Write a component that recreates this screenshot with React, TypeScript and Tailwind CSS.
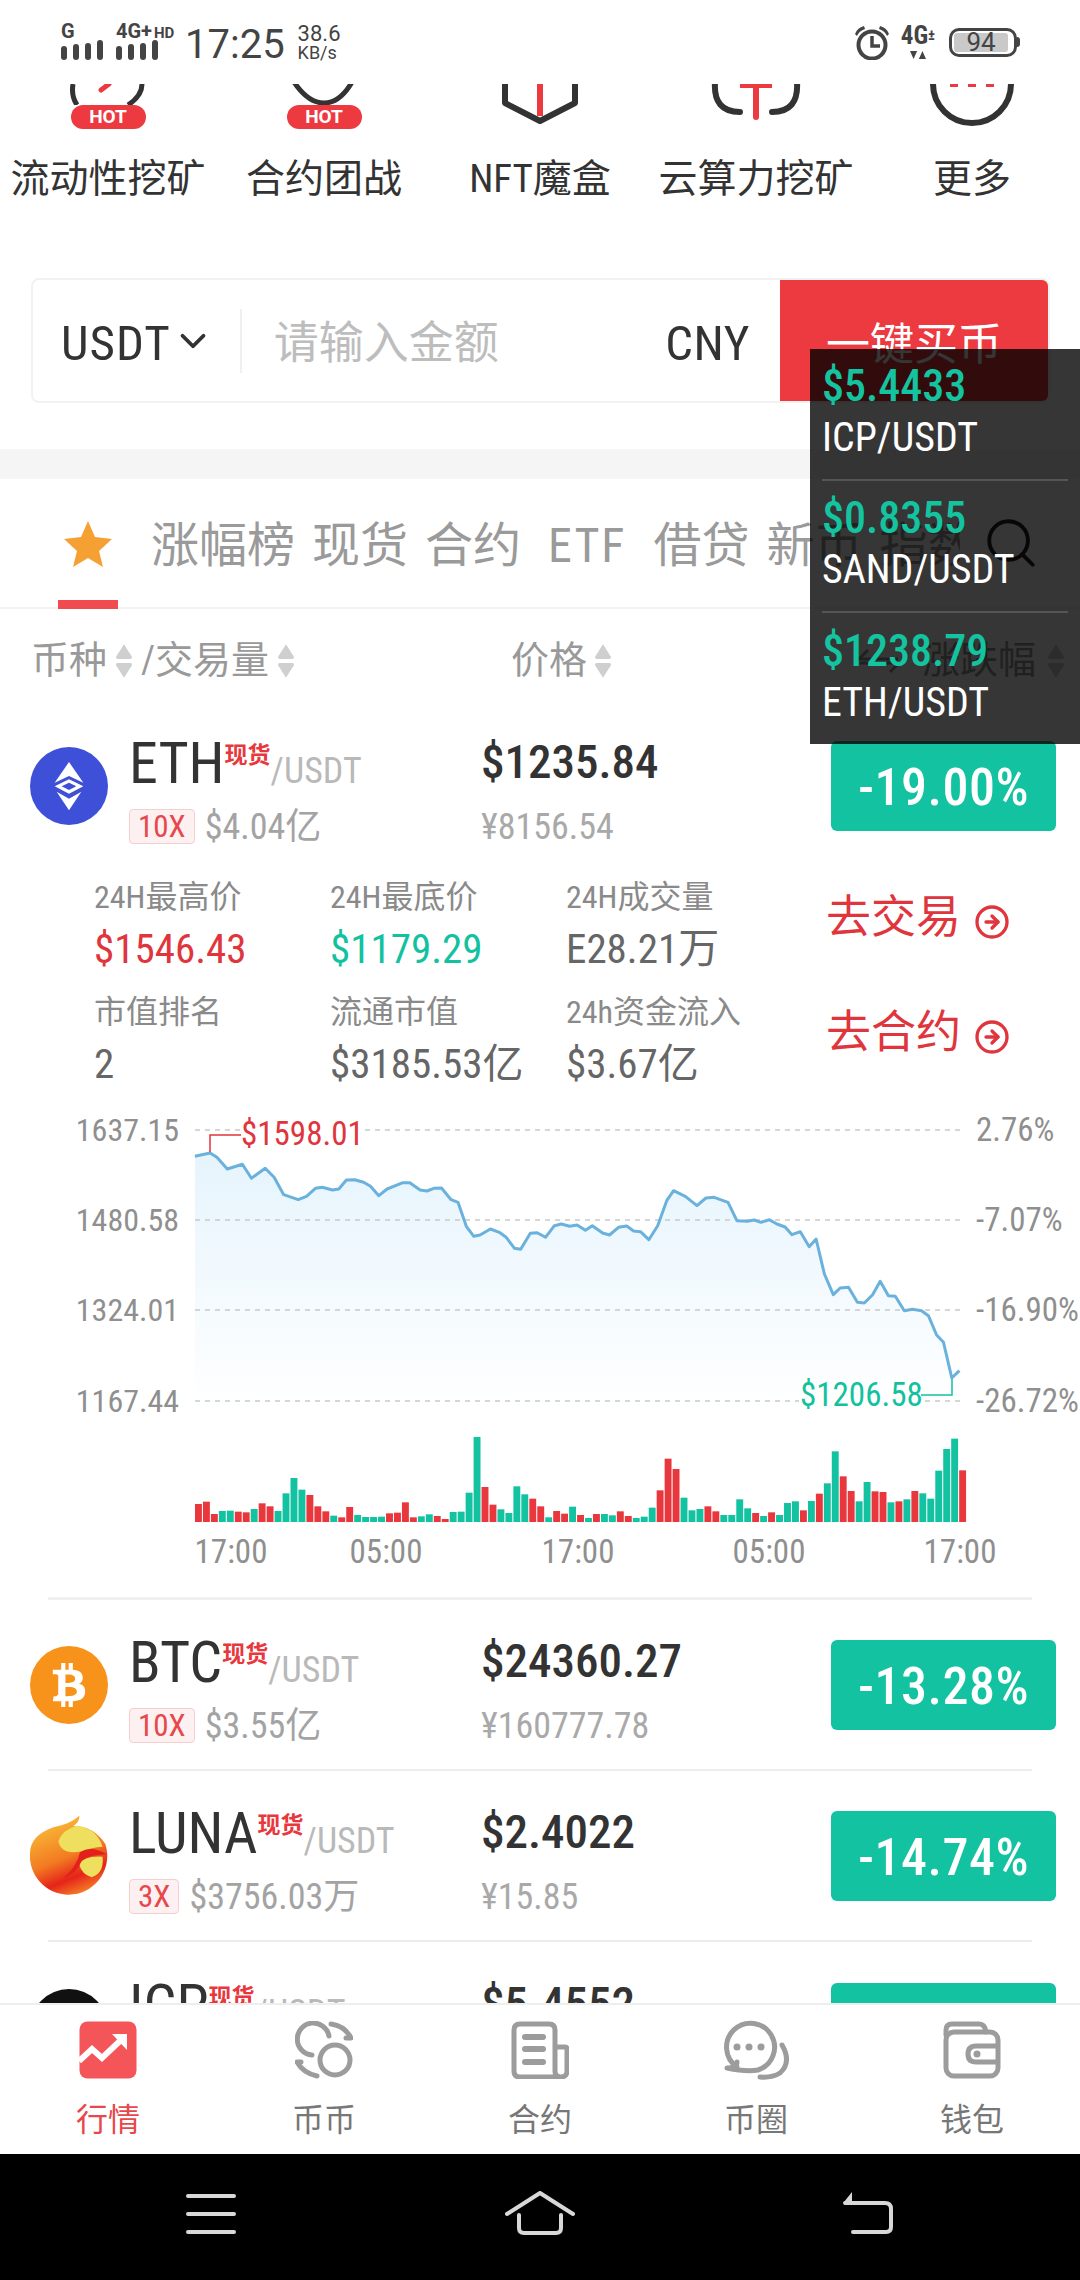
import { CircleArrowRight, ChevronDown, Search } from "lucide-react";
import { FaBtc } from "react-icons/fa";

const LINE = "283,202 305,192 315,205 330,240 352,226 365,268 385,238 398,265 412,317 433,332 445,322 458,298 468,295 483,303 492,300 503,273 515,272 528,280 538,292 550,320 562,300 585,281 595,281 610,303 620,306 630,298 641,297 655,332 665,340 677,412 688,442 697,438 712,420 725,430 735,445 747,478 756,481 770,433 780,431 792,445 805,410 815,405 827,412 838,408 850,424 860,410 875,432 885,438 898,415 910,411 920,426 930,428 942,452 955,410 968,335 978,305 995,322 1012,350 1025,327 1037,325 1057,340 1070,395 1085,397 1095,393 1105,400 1117,392 1128,405 1140,414 1150,437 1162,428 1175,473 1185,450 1197,555 1210,617 1220,597 1232,595 1245,640 1255,642 1267,617 1278,577 1290,620 1300,622 1313,665 1325,661 1338,665 1348,680 1360,738 1370,760 1382,867 1393,845"
  .split(" ")
  .map((p) => p.split(",").map(Number))
  .map(([h, v]) => [+(h / 1.452).toFixed(1), +(v / 3).toFixed(1)]);

const BARS = "r1245 r1238 r1275 g1266 g1265 r1268 r1270 g1260 r1243 r1252 g1266 g1213 g1167 g1202 r1218 r1252 r1267 g1280 r1285 r1254 g1278 g1284 g1284 g1283 r1273 r1271 r1240 r1285 g1282 g1276 r1281 r1290 g1269 g1268 g1211 g1044 r1194 r1247 g1261 g1272 g1192 g1216 r1229 r1252 g1285 r1266 r1274 g1253 r1278 g1287 r1275 g1275 g1279 r1267 r1281 g1287 g1283 g1256 r1204 r1109 r1140 g1226 g1264 g1260 r1252 r1267 g1278 g1278 g1231 g1258 r1272 g1281 r1270 g1278 g1242 g1237 r1264 g1236 r1214 g1183 g1087 r1162 r1206 g1237 g1179 r1207 r1209 g1240 r1237 g1231 r1206 g1213 g1229 g1145 g1080 g1049 r1144".split(" ");

function SortArrows() {
  return (
    <svg width="20" height="36" viewBox="0 0 19 34" className="shrink-0">
      <path d="M9.5 1 L17 13 Q17.5 15 15.5 15 H3.5 Q1.5 15 2 13 Z" fill="#cfcfcf" />
      <path d="M9.5 33 L17 21 Q17.5 19 15.5 19 H3.5 Q1.5 19 2 21 Z" fill="#cfcfcf" />
    </svg>
  );
}

function Signal() {
  return (
    <svg width="42" height="20" viewBox="0 0 42 20" className="block">
      <rect x="0" y="6" width="6" height="14" rx="3" fill="#444" />
      <rect x="12" y="4" width="6" height="16" rx="3" fill="#444" />
      <rect x="24" y="3" width="6" height="17" rx="3" fill="#444" />
      <rect x="36" y="0" width="6" height="20" rx="3" fill="#444" />
    </svg>
  );
}

function StatusBar() {
  return (
    <div className="h-[84px] shrink-0 flex items-center pl-[61px] pr-[60px] text-[#444] font-stretch-normal">
      <div className="w-[55px] h-[36px] flex flex-col justify-between">
        <span className="text-[20px] leading-[14px] font-bold">G</span>
        <Signal />
      </div>
      <div className="w-[71px] h-[36px] flex flex-col justify-between">
        <span className="text-[20px] leading-[14px] font-bold whitespace-nowrap">4G+<span className="text-[15px] ml-[2px]">HD</span></span>
        <Signal />
      </div>
      <span className="text-[40px] leading-none ml-[-2px] mt-[6px]">17:25</span>
      <div className="ml-[13px] flex flex-col mt-[2px]">
        <span className="text-[22px] leading-[20px]">38.6</span>
        <span className="text-[18px] leading-[18px]">KB/s</span>
      </div>
      <div className="flex-1" />
      <svg width="36" height="36" viewBox="0 0 36 36" className="mr-[9px]">
        <circle cx="18" cy="21" r="13.5" fill="none" stroke="#444" strokeWidth="4" />
        <path d="M18 12 V22 H26" fill="none" stroke="#444" strokeWidth="3.5" />
        <path d="M1 10 Q3 4 10 2 L11 5 Q5 7 3 12 Z M35 10 Q33 4 26 2 L25 5 Q31 7 33 12 Z" fill="#444" />
      </svg>
      <div className="w-[38px] h-[34px] flex flex-col items-center mr-[12px]">
        <span className="text-[25px] leading-[20px] font-bold font-stretch-condensed whitespace-nowrap">4G<span className="text-[15px] align-[4px]">±</span></span>
        <svg width="18" height="9" viewBox="0 0 18 9" className="mt-[5px]">
          <path d="M0 0 H8 L4 9 Z M10 9 H18 L14 0 Z" fill="#444" />
        </svg>
      </div>
      <div className="w-[68px] h-[29px] border-[3px] border-[#444] rounded-[10px] p-[2px] flex">
        <div className="w-[54px] h-full bg-[#c9c9c9] rounded-[3px] flex items-center justify-center text-[26px] leading-none">94</div>
      </div>
      <div className="w-[3px] h-[10px] bg-[#444] rounded-r-sm" />
    </div>
  );
}

function Hot() {
  return (
    <div className="w-[75px] h-[24px] rounded-full bg-[#ec3a40] text-white text-[19px] font-bold leading-[24px] text-center font-stretch-normal">HOT</div>
  );
}

function MenuIcon({ n }: { n: number }) {
  if (n === 0)
    return (
      <div className="h-[46px] flex flex-col items-center">
        <svg width="76" height="21" viewBox="0 0 76 21" className="block shrink-0">
          <path d="M3 0 Q1 12 7 21 M72 0 Q72 12 58 21" fill="none" stroke="#333" strokeWidth="5" />
          <path d="M31 6 L39 0" stroke="#ec3a40" strokeWidth="5" strokeLinecap="round" />
        </svg>
        <Hot />
      </div>
    );
  if (n === 1)
    return (
      <div className="h-[46px] flex flex-col items-center">
        <svg width="76" height="21" viewBox="0 0 76 21" className="block shrink-0">
          <path d="M8 -2 Q22 19 38 19 Q54 19 66 -2" fill="none" stroke="#333" strokeWidth="5" />
        </svg>
        <Hot />
      </div>
    );
  if (n === 2)
    return (
      <svg width="76" height="46" viewBox="0 0 76 46" className="block">
        <path d="M3 -2 V19 L38 37 L73 19 V-2" fill="none" stroke="#333" strokeWidth="6" strokeLinejoin="round" />
        <path d="M38 0 V32" stroke="#ec3a40" strokeWidth="6" />
      </svg>
    );
  if (n === 3)
    return (
      <svg width="92" height="46" viewBox="0 0 92 46" className="block">
        <path d="M5 -2 Q3 28 30 28 M87 -2 Q89 28 62 28" fill="none" stroke="#333" strokeWidth="6" strokeLinecap="round" />
        <path d="M30 1 H62" stroke="#ec3a40" strokeWidth="6" />
        <path d="M46 0 V33" stroke="#ec3a40" strokeWidth="6" strokeLinecap="round" />
      </svg>
    );
  return (
    <svg width="84" height="46" viewBox="0 0 84 46" className="block">
      <path d="M3 0 A39 39 0 0 0 81 0" fill="none" stroke="#333" strokeWidth="6" />
      <path d="M20 1 H28 M38 1 H46 M56 1 H64" stroke="#ec3a40" strokeWidth="4" />
    </svg>
  );
}

function Menu() {
  const items = ["流动性挖矿", "合约团战", "NFT魔盒", "云算力挖矿", "更多"];
  return (
    <div className="grid grid-cols-5 shrink-0">
      {items.map((t, i) => (
        <div key={t} className="flex flex-col items-center">
          <MenuIcon n={i} />
          <div className="mt-[27px] text-[39px] leading-[44px] text-[#333] whitespace-nowrap">{t}</div>
        </div>
      ))}
    </div>
  );
}

function BuyBar() {
  return (
    <div className="mt-[77px] mx-[31px] w-[1019px] h-[125px] shrink-0 rounded-lg border-2 border-[#f2f2f2] flex items-center overflow-hidden">
      <span className="ml-[28px] mt-[6px] text-[49px] text-[#333] leading-[60px] tracking-[1px]">USDT</span>
      <ChevronDown size={42} strokeWidth={2.2} className="text-[#333] ml-[1px]" />
      <div className="ml-[26px] w-[2px] h-[64px] bg-[#f0f0f0]" />
      <span className="ml-[32px] mt-[6px] text-[45px] text-[#bdbdbd] leading-[60px]">请输入金额</span>
      <span className="ml-auto mt-[6px] text-[49px] text-[#333] leading-[60px] tracking-[0.5px]">CNY</span>
      <div className="ml-[30px] w-[268px] h-[125px] pt-[8px] bg-[#ec3a40] flex items-center justify-center text-[44px] text-white">一键买币</div>
    </div>
  );
}

function Tabs() {
  return (
    <div className="h-[130px] shrink-0 border-b-2 border-[#f3f3f3] flex items-center text-[48px] text-[#9a9a9a] relative">
      <div className="w-[60px] ml-[58px] h-[130px] flex items-center justify-center border-b-[9px] border-[#f04c50] mb-[-2px] shrink-0">
        <svg width="48" height="46" viewBox="0 0 48 46" className="mt-[9px]">
          <path d="M24 0 L31 16 L48 18 L35 30 L39 46 L24 37 L9 46 L13 30 L0 18 L17 16 Z" fill="#f5a033" />
        </svg>
      </div>
      <div className="ml-[33px] pt-[5px] flex gap-[17px] whitespace-nowrap leading-[64px] overflow-hidden flex-1">
        <span>涨幅榜</span>
        <span>现货</span>
        <span>合约</span>
        <span className="mx-[10px] tracking-[2px]">ETF</span>
        <span>借贷</span>
        <span>新币</span>
        <span>指数</span>
      </div>
      <div className="w-[120px] h-[100px] shrink-0 flex items-center justify-end pr-[40px] bg-gradient-to-r from-white/0 to-white to-50%">
        <Search size={58} strokeWidth={1.6} className="text-[#222]" />
      </div>
    </div>
  );
}

function HeaderRow() {
  return (
    <div className="h-[91px] pt-[12px] shrink-0 flex items-center pl-[31px] text-[38px] text-[#999]">
      <div className="w-[480px] flex items-center gap-[7px] whitespace-nowrap">
        <span>币种</span>
        <SortArrows />
        <span>/交易量</span>
        <SortArrows />
      </div>
      <div className="w-[346px] flex items-center gap-[6px]">
        <span>价格</span>
        <SortArrows />
      </div>
      <svg width="46" height="34" viewBox="0 0 46 34" className="ml-[-1px]" fill="none" stroke="#999" strokeWidth="3">
        <path d="M12 6 L3 15 H42 M34 28 L43 19 H4" />
      </svg>
      <span className="ml-[20px]">涨跌幅</span>
      <span className="ml-[10px]"><SortArrows /></span>
    </div>
  );
}

function EthLogo() {
  return (
    <svg width="78" height="78" viewBox="30 23 234 234" className="block">
      <circle cx="147" cy="140" r="117" fill="#3f50d8" />
      <path d="M147 68 L190 130 L147 110 L104 130 Z" fill="#fff" />
      <path d="M147 120 L190 141 L147 163 L104 141 Z M147 130 L125 141 L147 152 L169 141 Z" fill="#fff" fillRule="evenodd" />
      <path d="M110 157 L147 178 L184 157 L147 213 Z" fill="#fff" />
    </svg>
  );
}

function BtcLogo() {
  return (
    <div className="w-[78px] h-[78px] rounded-full bg-[#f7931a] flex items-center justify-center text-white">
      <FaBtc size={44} />
    </div>
  );
}

function LunaLogo() {
  return (
    <svg width="78" height="84" viewBox="30 530 234 252" className="block">
      <defs>
        <linearGradient id="luna" x1="0.2" y1="0" x2="0.6" y2="1">
          <stop offset="0" stopColor="#f9c53a" />
          <stop offset="0.55" stopColor="#f27a22" />
          <stop offset="0.8" stopColor="#e5231a" />
          <stop offset="1" stopColor="#f47a25" />
        </linearGradient>
      </defs>
      <path d="M30 648 A116 116 0 1 0 256 620 Q220 565 160 566 Q180 552 178 535 Q150 560 100 570 Q30 595 30 648 Z" fill="url(#luna)" />
      <path d="M115 612 Q125 578 170 565 Q228 570 248 628 Q215 630 185 642 Q125 655 115 612 Z" fill="#efdf5e" />
      <path d="M248 660 Q252 708 215 720 Q185 710 178 682 Q190 655 248 658 Z" fill="#efdf5e" />
      <path d="M262 652 Q215 622 180 645 Q170 690 130 722 Q170 710 185 670 Q215 650 262 652 Z" fill="#e3201b" />
    </svg>
  );
}

type RowProps = {
  logo: React.ReactNode;
  name: string;
  lev?: string;
  vol?: string;
  price: string;
  cny?: string;
  change?: string;
  border?: boolean;
};

function Row({ logo, name, lev, vol, price, cny, change, border }: RowProps) {
  return (
    <div className={border ? "h-[171px] shrink-0 border-b-2 border-[#ececec] mx-[48px] flex items-center" : "h-[171px] shrink-0 mx-[48px] flex items-center"}>
      <div className="ml-[-18px] w-[78px] shrink-0 flex justify-center">{logo}</div>
      <div className="ml-[21px] w-[352px] shrink-0 h-[116px] pt-[8px]">
        <div className="h-[54px] leading-[54px] whitespace-nowrap">
          <span className="text-[58px] text-[#333]">{name}</span>
          <span className="text-[23px] font-bold text-[#e8373d] align-[20px] leading-none">现货</span>
          <span className="text-[36px] text-[#b9b9b9] leading-none">/USDT</span>
        </div>
        {lev && (
          <div className="mt-[19px] h-[36px] flex items-center">
            <span className="h-[35px] px-[8px] rounded-[4px] border border-[#f5cfcf] bg-[#fdf0f0] text-[31px] leading-[33px] text-[#e8474c]">{lev}</span>
            <span className="ml-[10px] text-[36px] leading-[40px] text-[#a3a3a3]">{vol}</span>
          </div>
        )}
      </div>
      <div className="w-[350px] shrink-0 h-[114px] pt-[6px]">
        <div className="h-[54px] leading-[54px] text-[47px] font-medium text-[#333]">{price}</div>
        {cny && <div className="mt-[20px] h-[36px] leading-[36px] text-[36px] text-[#a9a9a9]">{cny}</div>}
      </div>
      <div className="w-[225px] h-[90px] pt-[4px] shrink-0 rounded-[6px] bg-[#12c2a0] flex items-center justify-center text-[52px] font-medium text-white tracking-[0.5px]">{change}</div>
    </div>
  );
}

function Stat({ label, value, color }: { label: string; value: string; color: string }) {
  return (
    <div className="flex flex-col">
      <span className="h-[50px] leading-[50px] text-[32px] text-[#8a8a8a] whitespace-nowrap">{label}</span>
      <span className={`mt-[2px] h-[50px] leading-[50px] text-[41px] whitespace-nowrap ${color}`}>{value}</span>
    </div>
  );
}

function Details() {
  return (
    <div className="h-[218px] shrink-0 pl-[94px] pt-[1px] flex">
      <div className="w-[732px] shrink-0 grid grid-cols-[236px_236px_260px] gap-y-[13px] content-start">
        <Stat label="24H最高价" value="$1546.43" color="text-[#e0353c]" />
        <Stat label="24H最底价" value="$1179.29" color="text-[#12c29f]" />
        <Stat label="24H成交量" value="E28.21万" color="text-[#666]" />
        <Stat label="市值排名" value="2" color="text-[#666]" />
        <Stat label="流通市值" value="$3185.53亿" color="text-[#666]" />
        <Stat label="24h资金流入" value="$3.67亿" color="text-[#666]" />
      </div>
      <div className="flex flex-col text-[45px] text-[#e0353c] pt-[18px] gap-[59px]">
        <div className="flex items-center h-[56px]">
          <span className="leading-[56px]">去交易</span>
          <CircleArrowRight size={36} strokeWidth={2.2} className="ml-[13px] mt-[8px]" />
        </div>
        <div className="flex items-center h-[56px]">
          <span className="leading-[56px]">去合约</span>
          <CircleArrowRight size={36} strokeWidth={2.2} className="ml-[13px] mt-[8px]" />
        </div>
      </div>
    </div>
  );
}

function Chart() {
  const pts = LINE.map((p) => p.join(",")).join(" ");
  const grid = [41, 131, 221, 312];
  const left = ["1637.15", "1480.58", "1324.01", "1167.44"];
  const right = ["2.76%", "-7.07%", "-16.90%", "-26.72%"];
  const times: [number, string][] = [[231, "17:00"], [386, "05:00"], [578, "17:00"], [769, "05:00"], [960, "17:00"]];
  return (
    <svg width="1080" height="508" viewBox="0 0 1080 508" className="block shrink-0">
      <defs>
        <linearGradient id="area" x1="0" y1="0" x2="0" y2="1">
          <stop offset="0" stopColor="#e6f4fd" />
          <stop offset="1" stopColor="#ffffff" />
        </linearGradient>
      </defs>
      <polygon points={`195,70 ${pts} 960,320 195,320`} fill="url(#area)" />
      {grid.map((y, i) => (
        <g key={y}>
          <line x1="195" x2="960" y1={y} y2={y} stroke="#c9c9c9" strokeWidth="1.5" strokeDasharray="5 5" />
          <text x="179" y={y + 11} textAnchor="end" className="text-[32px] fill-[#8f8f8f]">{left[i]}</text>
          <text x="976" y={y + 11} className="text-[33px] fill-[#8f8f8f]">{right[i]}</text>
        </g>
      ))}
      <polyline points={pts} fill="none" stroke="#6ab2dc" strokeWidth="3" strokeLinejoin="round" />
      <rect x="240" y="28" width="122" height="36" fill="#fff" />
      <path d="M210 63 V46 H241" fill="none" stroke="#e0353c" strokeWidth="1.5" />
      <text x="241" y="56" className="text-[33px] fill-[#e0353c]">$1598.01</text>
      <rect x="799" y="290" width="122" height="36" fill="#fff" />
      <path d="M952 290 V306 H921" fill="none" stroke="#12c29f" strokeWidth="1.5" />
      <text x="800" y="317" className="text-[33px] fill-[#12c29f]">$1206.58</text>
      {BARS.map((b, i) => {
        const top = +b.slice(1) / 3;
        const x = 195 + i * 7.96;
        return <rect key={i} x={x} y={top} width="6.9" height={433 - top} fill={b[0] === "r" ? "#e8373d" : "#12c2a0"} />;
      })}
      {times.map(([x, t], i) => (
        <text key={i} x={x} y="474" textAnchor="middle" className="text-[33px] fill-[#8f8f8f]">{t}</text>
      ))}
    </svg>
  );
}

function TabIcon({ n }: { n: number }) {
  const s = { fill: "none", stroke: "#9c9c9c", strokeWidth: 5, strokeLinecap: "round" as const, strokeLinejoin: "round" as const };
  if (n === 0)
    return (
      <svg width="58" height="58" viewBox="0 0 58 58" className="block">
        <rect x="0.5" y="0.5" width="57" height="57" rx="8" fill="#f45558" />
        <path d="M0 40 L13 28 L23 37 L42 19" fill="none" stroke="#fff" strokeWidth="6" />
        <path d="M33 13 H48 V29 Z" fill="#fff" />
      </svg>
    );
  if (n === 1)
    return (
      <svg width="58" height="58" viewBox="0 0 58 58" className="block">
        <circle cx="40" cy="39" r="15" {...s} />
        <path d="M34 15 A16 16 0 1 0 17 34" {...s} />
        <path d="M36 3 Q50 5 56 17 M51 17 H56" {...s} />
        <path d="M2 41 Q8 52 22 55 M2 41 H6" {...s} />
      </svg>
    );
  if (n === 2)
    return (
      <svg width="58" height="58" viewBox="0 0 58 58" className="block">
        <path d="M44 56 H9 Q3 56 3 50 V9 Q3 3 9 3 H38 Q44 3 44 9 V50 Q44 56 50 56 Q56 56 56 50 V28 Q56 26 54 26 H44" {...s} />
        <path d="M14 16 H32 M14 28 H32 M14 41 H32" {...s} strokeWidth={6} />
      </svg>
    );
  if (n === 3)
    return (
      <svg width="68" height="60" viewBox="0 0 68 60" className="block">
        <path d="M15 47 A24 24 0 1 1 36 50 Q24 52 5 48 Q15 48 15 42" {...s} />
        <circle cx="15" cy="27" r="3.5" fill="#9c9c9c" />
        <circle cx="27" cy="27" r="3.5" fill="#9c9c9c" />
        <circle cx="39" cy="27" r="3.5" fill="#9c9c9c" />
        <path d="M60 25 Q70 42 58 53 Q50 58 38 57" {...s} />
      </svg>
    );
  return (
    <svg width="58" height="58" viewBox="0 0 58 58" className="block">
      <path d="M3 14 V9 Q3 3 9 3 H36 Q42 3 43 11" {...s} />
      <rect x="3" y="11" width="52" height="44" rx="8" {...s} />
      <path d="M54 25 H33 Q25 25 25 33 Q25 41 33 41 H54" {...s} />
      <circle cx="34" cy="33" r="3.5" fill="#9c9c9c" />
    </svg>
  );
}

function TabBar() {
  const items = ["行情", "币币", "合约", "币圈", "钱包"];
  return (
    <div className="h-[151px] shrink-0 bg-white border-t-2 border-[#eeeeee] grid grid-cols-5">
      {items.map((t, i) => (
        <div key={t} className="flex flex-col items-center">
          <div className="h-[60px] mt-[15px] flex items-center"><TabIcon n={i} /></div>
          <span className={i === 0 ? "mt-[20px] text-[32px] leading-[40px] text-[#e8474c]" : "mt-[20px] text-[32px] leading-[40px] text-[#777]"}>{t}</span>
        </div>
      ))}
    </div>
  );
}

function NavBar() {
  return (
    <div className="h-[126px] shrink-0 bg-black grid grid-cols-[432px_216px_432px] items-center justify-items-center text-[#d8d8d8]">
      <svg width="50" height="42" viewBox="0 0 50 42" fill="none" stroke="currentColor" strokeWidth="4" strokeLinecap="round" className="mb-[6px] mr-[11px]">
        <path d="M2 3 H48 M2 21 H48 M2 39 H48" />
      </svg>
      <svg width="70" height="44" viewBox="0 0 70 44" fill="none" stroke="currentColor" strokeWidth="4" strokeLinecap="round" strokeLinejoin="round" className="mb-[8px]">
        <path d="M2 23 L35 2 L68 23 M14 24 V37 Q14 42 19 42 H51 Q56 42 56 37 V24" />
      </svg>
      <svg width="50" height="44" viewBox="0 0 50 44" fill="none" stroke="currentColor" strokeWidth="4" strokeLinecap="round" strokeLinejoin="round" className="mb-[8px] ml-[8px]">
        <path d="M2 12 H42 Q48 12 48 18 V36 Q48 41 43 41 H10" />
        <path d="M9 1 V11 H1 Z" fill="currentColor" stroke="none" />
      </svg>
    </div>
  );
}

function Ticker({ price, pair, last }: { price: string; pair: string; last?: boolean }) {
  return (
    <div className={last ? "h-[132px] pb-[8px] flex flex-col justify-center" : "h-[132px] pb-[8px] border-b-2 border-[#555] flex flex-col justify-center"}>
      <div className="text-[44px] leading-[50px] font-medium text-[#14c39f]">{price}</div>
      <div className="mt-[5px] text-[40px] leading-[44px] text-white">{pair}</div>
    </div>
  );
}

export default function App() {
  return (
    <div className="w-[1080px] h-[2280px] relative overflow-hidden flex flex-col bg-white font-['Roboto','Noto_Sans_CJK_SC',sans-serif] font-stretch-condensed">
      <StatusBar />
      <div className="flex-1 min-h-0 overflow-hidden flex flex-col">
        <Menu />
        <BuyBar />
        <div className="mt-[46px] h-[30px] shrink-0 bg-[#f5f5f5]" />
        <Tabs />
        <HeaderRow />
        <Row logo={<EthLogo />} name="ETH" lev="10X" vol="$4.04亿" price="$1235.84" cny="¥8156.54" change="-19.00%" />
        <Details />
        <Chart />
        <div className="mx-[48px] h-[3px] shrink-0 bg-[#f0f0f0]" />
        <Row logo={<BtcLogo />} name="BTC" lev="10X" vol="$3.55亿" price="$24360.27" cny="¥160777.78" change="-13.28%" border />
        <Row logo={<LunaLogo />} name="LUNA" lev="3X" vol="$3756.03万" price="$2.4022" cny="¥15.85" change="-14.74%" border />
        <Row logo={<div className="w-[78px] h-[78px] rounded-full bg-[#111]" />} name="ICP" price="$5.4552" />
      </div>
      <TabBar />
      <NavBar />
      <div className="absolute left-[810px] top-[349px] w-[270px] h-[395px] bg-[rgba(0,0,0,0.79)] pl-[12px] pr-[12px]">
        <Ticker price="$5.4433" pair="ICP/USDT" />
        <Ticker price="$0.8355" pair="SAND/USDT" />
        <Ticker price="$1238.79" pair="ETH/USDT" last />
      </div>
    </div>
  );
}
